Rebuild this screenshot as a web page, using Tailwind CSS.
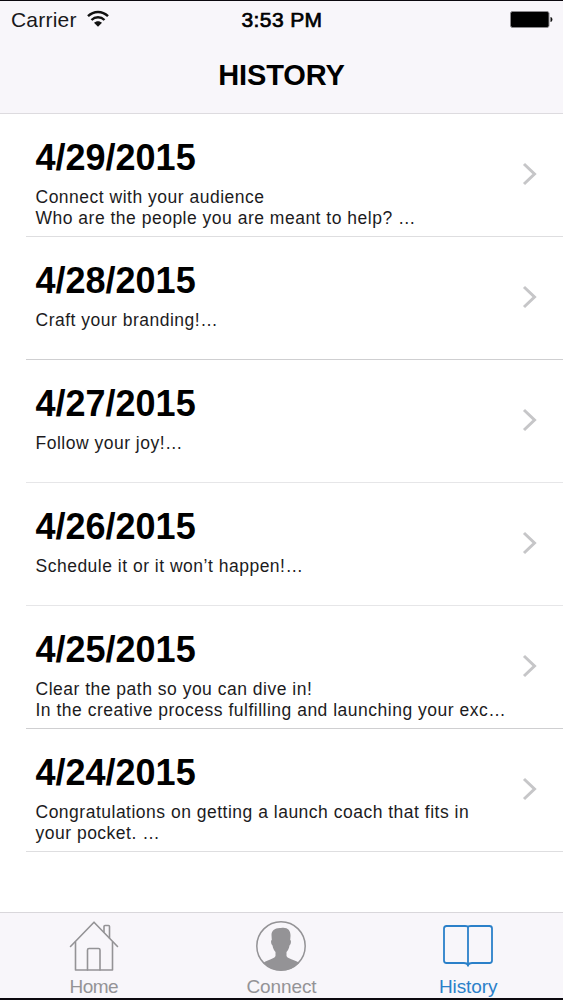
<!DOCTYPE html>
<html lang="en">
<head>
    <meta charset="UTF-8">
    <title>History</title>
    <script src="https://cdn.jsdelivr.net/npm/@tailwindcss/browser@4"></script>
</head>
<body class="bg-white">
    <div class="w-[563px] h-[1000px] flex flex-col overflow-hidden border-t-1 border-b-2 border-[#0b080e] bg-white text-black font-['Liberation_Sans',Arial,sans-serif]">
        <!-- Status bar + title -->
        <header class="h-[113px] shrink-0 bg-[#f8f6fa] border-b border-[#dddbdf]">
            <div class="grid grid-cols-3 items-center h-[37px] pl-[11px] pr-[10px]">
                <div class="flex items-center gap-[10px]">
                    <span id="carrier" class="text-[21px] leading-[37px] tracking-[0.2px] text-[#19181a]">Carrier</span>
                    <svg class="w-[22px] h-[17px] -mt-[2px]" viewBox="0 0 22 17" fill="none" stroke="#111" stroke-width="2.400">
                        <path d="M1 6.200C6.800.500 15.200.500 21 6.200"/>
                        <path d="M4.500 10c3.700-3.600 9.300-3.600 13 0"/>
                        <path d="M7 12.800c2.200-2.200 5.800-2.200 8 0L11 16.800z" fill="#111" stroke="none"/>
                    </svg>
                </div>
                <span id="clock" class="text-center whitespace-nowrap text-[21px] leading-[37px] tracking-[0.4px] [-webkit-text-stroke:0.7px_#000]">3:53 PM</span>
                <svg class="w-[43px] h-[17px] justify-self-end -mt-px" viewBox="0 0 43 17">
                    <rect x=".5" y=".5" width="38.500" height="16" rx="2" fill="#000" stroke="#8b898d"/>
                    <path d="M40.500 6c2.600.5 2.600 4.500 0 5z" fill="#111"/>
                </svg>
            </div>
            <h1 class="text-center text-[29px] leading-[75px] font-bold tracking-[-0.1px]">HISTORY</h1>
        </header>

        <!-- Entries -->
        <main id="entries" class="flex-1 pl-[26px]"></main>

        <!-- Tab bar -->
        <nav class="h-[86px] shrink-0 grid grid-cols-3 bg-[#f8f6fa] border-t border-[#d9d7db] text-[19px] leading-[20px] text-[#949396]">
            <div class="flex flex-col items-center">
                <svg class="w-[50px] h-[50px] mt-[8px]" viewBox="0 0 50 50" fill="none" stroke="#949396" stroke-width="1.600" stroke-linejoin="round" stroke-linecap="round">
                    <path d="M1.500 25.500 25 1.200 48.500 25.500"/>
                    <path d="M6.500 21v28h37V21"/>
                    <path d="M18.500 49V29q0-1.500 1.500-1.500h9.500q1.500 0 1.500 1.500v20"/>
                    <path d="M35 11V5.500q0-1 1-1h3.500q1 0 1 1V17"/>
                </svg>
                <span class="mt-[6px] tracking-[-0.5px]">Home</span>
            </div>
            <div class="flex flex-col items-center">
                <svg class="w-[50px] h-[50px] mt-[8px]" viewBox="0 0 50 50">
                    <circle cx="25" cy="25" r="24.200" fill="none" stroke="#949396" stroke-width="1.500"/>
                    <path d="M25 7c6.500-1.200 9.800 2.500 9.500 8l-.3 4c1.300.3.8 4.500-.7 5.500-.5 3-1.500 4.700-3 6.500v4c1.500 3.500 9 3.500 12.500 7A24.500 24.500 0 0 1 7.500 42c3.500-3.500 10.500-3.500 12-7v-4c-1.500-1.800-2.500-3.500-3-6.500-1.500-1-2-5.200-.7-5.500l-.3-5C15.500 9.500 19 6.500 25 7z" fill="#949396"/>
                </svg>
                <span class="mt-[6px] tracking-[-0.1px]">Connect</span>
            </div>
            <div class="flex flex-col items-center pr-[2px] text-[#2b80c9]">
                <svg class="w-[50px] h-[50px] mt-[8px]" viewBox="0 0 50 50" fill="none" stroke="#2b80c9" stroke-width="1.800" stroke-linejoin="round">
                    <path d="M25 5.500Q24 5 22 5H3.500Q1 5 1 7.500v32Q1 42 3.500 42H21q3 0 4 2 1-2 4-2h17.500q2.500 0 2.500-2.500v-32Q49 5 46.500 5H28q-2 0-3 .5z"/>
                    <path d="M25 5v40.500"/>
                </svg>
                <span class="mt-[6px] tracking-[-0.1px]">History</span>
            </div>
        </nav>
    </div>

    <script>
        const entries = [
            { date: '4/29/2015', line: 'border-[#dedee0]', lines: ['Connect with your audience', 'Who are the people you are meant to help? …'] },
            { date: '4/28/2015', line: 'border-[#cfcfd1]', lines: ['Craft your branding!…'] },
            { date: '4/27/2015', line: 'border-[#e6e6e8]', lines: ['Follow your joy!…'] },
            { date: '4/26/2015', line: 'border-[#e6e6e8]', lines: ['Schedule it or it won’t happen!…'] },
            { date: '4/25/2015', line: 'border-[#cfcfd1]', lines: ['Clear the path so you can dive in!', 'In the creative process fulfilling and launching your exc…'] },
            { date: '4/24/2015', line: 'border-[#dedee0]', lines: ['Congratulations on getting a launch coach that fits in', 'your pocket. …'] }
        ];

        document.getElementById('entries').innerHTML = entries.map(entry => `
            <div class="h-[123px] flex items-center border-b ${entry.line} pl-[9.5px] pr-[26px]">
                <div class="flex-1 h-full pt-[24px] whitespace-nowrap">
                    <h2 class="text-[36px] leading-[40px] font-bold">${entry.date}</h2>
                    <p class="mt-[9px] text-[17.5px] leading-[20.5px] tracking-[0.5px] text-[#1c1b1d]">${entry.lines.join('<br>')}</p>
                </div>
                <svg class="w-[15px] h-[24px] -mt-[2px] shrink-0" viewBox="0 0 15 24" fill="none" stroke="#c6c6c8" stroke-width="3">
                    <path d="M2 2l10.500 10L2 22"/>
                </svg>
            </div>`).join('');
    </script>
</body>
</html>
